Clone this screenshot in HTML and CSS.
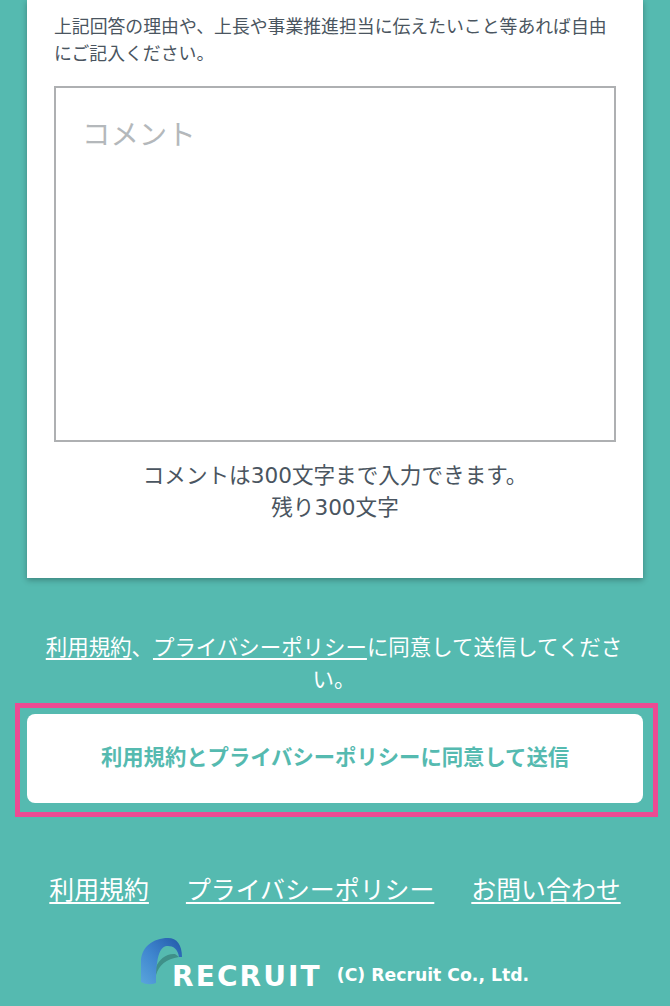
FILE: index.html
```html
<!DOCTYPE html>
<html lang="ja">
<head>
    <meta charset="utf-8">
    <title>アンケート</title>
    <link rel="stylesheet" href="styles.css">
</head>

<body>
    <div class="card">
        <p class="lead">上記回答の理由や、上長や事業推進担当に伝えたいこと等あれば自由にご記入ください。</p>
        <textarea class="comment" placeholder="コメント"></textarea>
        <p class="note">コメントは300文字まで入力できます。<br>残り300文字</p>
    </div>

    <p class="agree"><a href="#">利用規約</a>、<a href="#">プライバシーポリシー</a>に同意して送信してください。</p>

    <div class="highlight">
        <button class="send" type="button">利用規約とプライバシーポリシーに同意して送信</button>
    </div>

    <div class="links">
        <a href="#">利用規約</a>
        <a href="#">プライバシーポリシー</a>
        <a href="#">お問い合わせ</a>
    </div>

    <div class="foot">
        <svg class="arch" width="44" height="48" viewBox="0 0 44 48">
            <defs>
                <linearGradient id="archFill" x1="0" y1="1" x2="1" y2="0">
                    <stop offset="0" stop-color="#5aa5dc"/>
                    <stop offset="0.45" stop-color="#3f86cf"/>
                    <stop offset="1" stop-color="#2259a8"/>
                </linearGradient>
            </defs>
            <path d="M15 38 C18 28 25 22 38 20 L34 17 C26 16 18 22 15 30 Z" fill="#3f9089"/>
            <path d="M0 45 L0 25 C0 10 12 1 27 1 C36 1 41 8 41 20 L38 20 C37 12 32 9 27 9 C20 9 15 16 15 46 Q7 49 0 45 Z" fill="url(#archFill)"/>
        </svg>
        <span class="brand">RECRUIT</span>
        <span class="copy">(C) Recruit Co., Ltd.</span>
    </div>
</body>
</html>
```

FILE: styles.css
```css
* { margin: 0; padding: 0; box-sizing: border-box; }
html, body { height: 1006px; overflow: hidden; }
body {
    background: #55bab0;
    color: #fff;
    font-family: "DejaVu Sans", "Noto Sans CJK JP", sans-serif;
}
.card {
    width: 616px;
    height: 578px;
    margin-left: 27px;
    padding: 14px 27px 0;
    background: #fff;
    color: #4a5560;
    box-shadow: 0 2px 6px rgba(0, 0, 0, 0.3);
}
.lead {
    font-size: 17.85px;
    line-height: 26.6px;
}
.comment {
    display: block;
    width: 562px;
    height: 356.5px;
    margin-top: 18.8px;
    padding: 28px 26px;
    border: 2px solid #aeb0b2;
    border-radius: 0;
    font-family: inherit;
    font-size: 28.4px;
    line-height: 40px;
    resize: none;
    outline: none;
}
.comment::placeholder { color: #b4b8bb; }
.note {
    margin-top: 17.5px;
    font-size: 21.6px;
    line-height: 32px;
    text-align: center;
}
.agree {
    margin: 54px 42px 0 40px;
    font-size: 21.45px;
    line-height: 32px;
    text-align: center;
}
.agree a, .links a { color: #fff; text-underline-offset: 3px; }
.highlight {
    width: 643px;
    height: 114px;
    margin: 7px 0 0 15px;
    padding: 6px 10px 0 7px;
    border: 5px solid #ee4a93;
}
.send {
    display: block;
    width: 616px;
    height: 89px;
    padding-bottom: 6px;
    background: #fff;
    border: 0;
    border-radius: 8px;
    color: #55bab0;
    font-family: inherit;
    font-size: 21.33px;
    font-weight: bold;
}
.links {
    display: flex;
    justify-content: center;
    gap: 37px;
    margin-top: 55px;
    font-size: 24.9px;
    line-height: 38px;
}
.foot {
    display: flex;
    align-items: flex-end;
    height: 50px;
    margin: 25px 0 0 141px;
}
.arch { flex: none; }
.brand {
    margin-left: -13px;
    font-size: 28px;
    font-weight: bold;
    line-height: 17px;
    letter-spacing: 2.1px;
}
.copy {
    margin-left: 15px;
    font-size: 17.25px;
    font-weight: bold;
    line-height: 19px;
}
```
